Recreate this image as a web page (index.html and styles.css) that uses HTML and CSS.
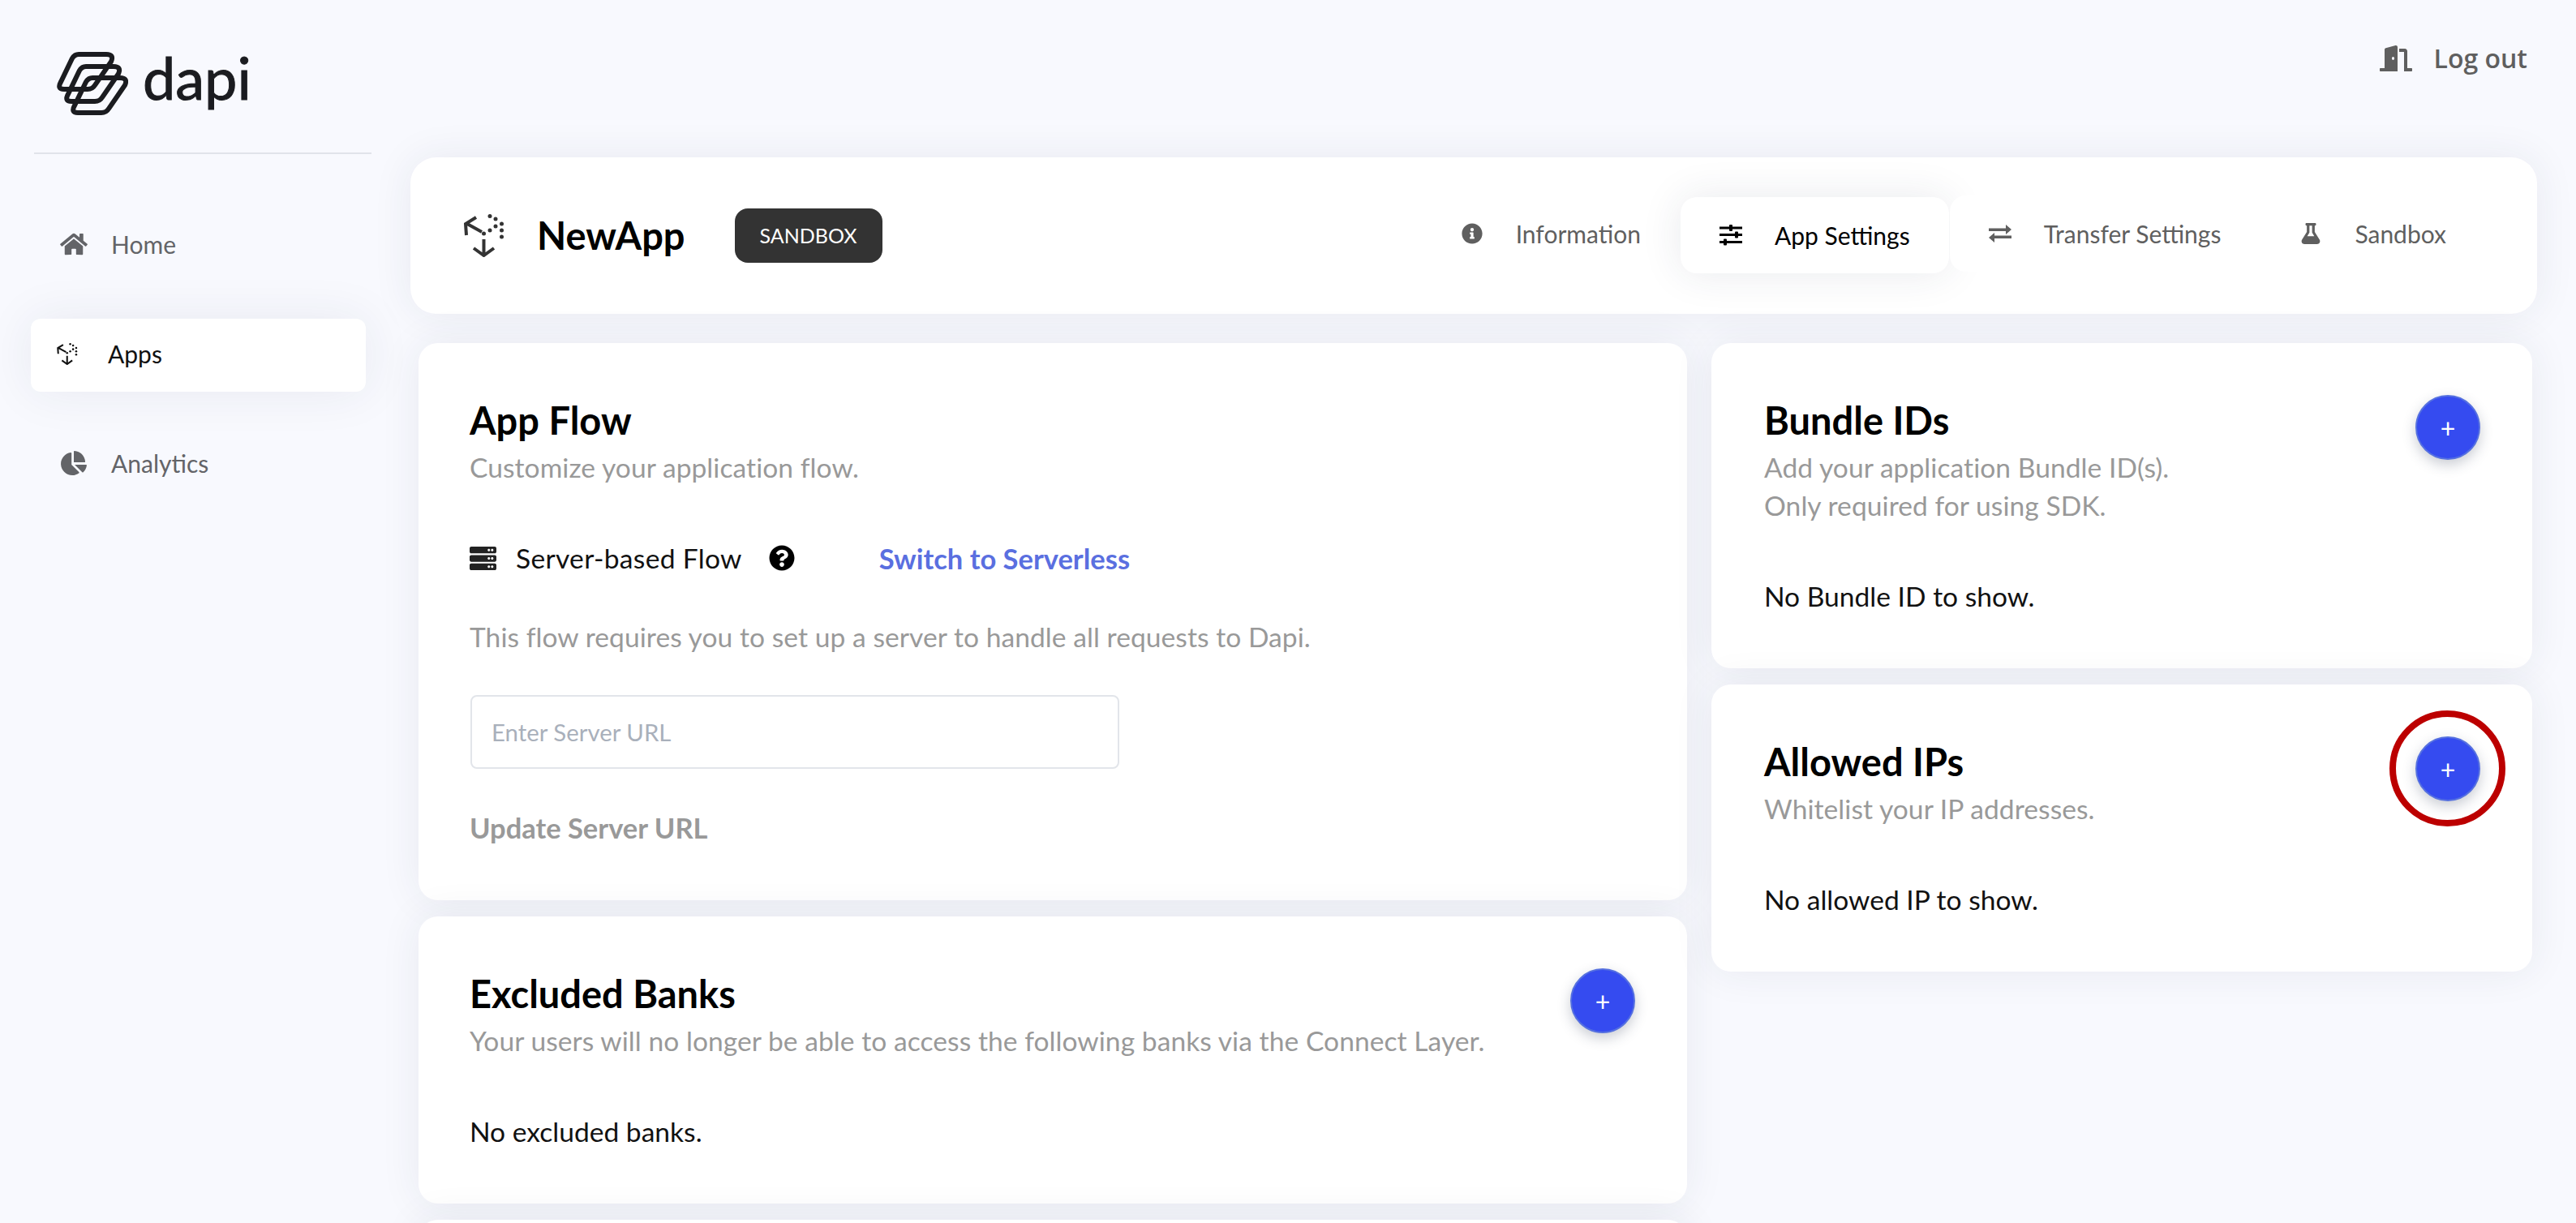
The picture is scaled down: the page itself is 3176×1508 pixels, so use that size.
FILE: index.html
```html
<!DOCTYPE html>
<html lang="en">
<head>
    <meta charset="UTF-8">
    <meta name="viewport" content="width=device-width, initial-scale=1.0">
    <title>Dapi - App Settings</title>
    <link rel="stylesheet" href="styles.css">
</head>
<body>

<div id="layout">
    <aside id="sidebar">
        <div class="brand">
            <svg class="brand-mark" viewBox="0 0 88 80">
                <path d="M27 3H61Q71 3 67 12L47 41Q44 46 38 46H9Q0 46 5 37L19 8Q22 3 27 3Z"/>
                <path transform="translate(9 15)" d="M27 3H61Q71 3 67 12L47 41Q44 46 38 46H9Q0 46 5 37L19 8Q22 3 27 3Z"/>
                <path transform="translate(17 29)" d="M27 3H61Q71 3 67 12L47 41Q44 46 38 46H9Q0 46 5 37L19 8Q22 3 27 3Z"/>
            </svg>
            <span class="brand-name">dapi</span>
        </div>
        <nav class="side-nav">
            <a class="side-item">
                <svg class="side-icon" viewBox="0 0 576 512"><path d="M280.37 148.26L96 300.11V464a16 16 0 0 0 16 16l112.06-.29a16 16 0 0 0 15.92-16V368a16 16 0 0 1 16-16h64a16 16 0 0 1 16 16v95.64a16 16 0 0 0 16 16.05L464 480a16 16 0 0 0 16-16V300L295.67 148.26a12.19 12.19 0 0 0-15.3 0zM571.6 251.47L488 182.56V44.05a12 12 0 0 0-12-12h-56a12 12 0 0 0-12 12v72.61L318.47 43a48 48 0 0 0-61 0L4.34 251.47a12 12 0 0 0-1.6 16.9l25.5 31A12 12 0 0 0 45.15 301l235.22-193.74a12.19 12.19 0 0 1 15.3 0L530.9 301a12 12 0 0 0 16.9-1.6l25.5-31a12 12 0 0 0-1.7-16.93z"/></svg>
                <span>Home</span>
            </a>
            <a class="side-item active">
                <svg class="side-icon cube" viewBox="0 0 50 53">
                    <path class="cube-line" d="M22 22L4 12M15 4L2 12L3 26M24.500 31V50M12 42L24.500 51L37 42"/>
                    <g class="cube-dots"><circle cx="32" cy="2.500" r="2.500"/><circle cx="39" cy="6" r="2.500"/><circle cx="46.500" cy="12" r="2.500"/><circle cx="39" cy="15" r="2.500"/><circle cx="32" cy="20" r="2.500"/><circle cx="24.500" cy="24" r="2.500"/><circle cx="46.500" cy="20" r="2.500"/><circle cx="46.500" cy="28" r="2.500"/></g>
                </svg>
                <span>Apps</span>
            </a>
            <a class="side-item">
                <svg class="side-icon" viewBox="0 0 544 512"><path d="M527.79 288H290.5l158.03 158.03c6.04 6.04 15.98 6.53 22.19.68 38.7-36.46 65.32-85.61 73.13-140.86 1.34-9.46-6.51-17.85-16.06-17.85zm-15.83-64.8C503.72 103.74 408.26 8.28 288.8.04 279.68-.59 272 7.1 272 16.24V240h223.77c9.14 0 16.82-7.68 16.19-16.8zM224 288V50.71c0-9.55-8.39-17.4-17.84-16.06C86.99 51.49-4.1 155.6.14 280.37 4.5 408.51 114.83 513.59 243.03 511.98c50.4-.63 96.97-16.87 135.26-44.03 7.9-5.6 8.42-17.23 1.57-24.08L224 288z"/></svg>
                <span>Analytics</span>
            </a>
        </nav>
    </aside>

    <main id="main">
        <div class="topbar">
            <a class="logout">
                <svg class="logout-icon" viewBox="0 0 640 512"><path d="M624 448h-80V113.45C544 86.19 522.47 64 496 64H384v64h96v384h144c8.84 0 16-7.16 16-16v-32c0-8.84-7.16-16-16-16zM312.24 1.01l-192 49.74C105.99 54.44 96 67.7 96 82.92V448H16c-8.84 0-16 7.16-16 16v32c0 8.84 7.16 16 16 16h336V33.18c0-21.58-19.56-37.41-39.76-32.17zM264 288c-13.25 0-24-14.33-24-32s10.75-32 24-32 24 14.33 24 32-10.75 32-24 32z"/></svg>
                <span>Log out</span>
            </a>
        </div>

        <header class="app-header">
            <div class="app-id">
                <svg class="app-icon cube" viewBox="0 0 50 53">
                    <path class="cube-line" d="M22 22L4 12M15 4L2 12L3 26M24.500 31V50M12 42L24.500 51L37 42"/>
                    <g class="cube-dots"><circle cx="32" cy="2.500" r="2.500"/><circle cx="39" cy="6" r="2.500"/><circle cx="46.500" cy="12" r="2.500"/><circle cx="39" cy="15" r="2.500"/><circle cx="32" cy="20" r="2.500"/><circle cx="24.500" cy="24" r="2.500"/><circle cx="46.500" cy="20" r="2.500"/><circle cx="46.500" cy="28" r="2.500"/></g>
                </svg>
                <span class="app-name">NewApp</span>
                <span class="env-badge">SANDBOX</span>
            </div>
            <nav class="tabs">
                <a class="tab">
                    <svg class="tab-icon" viewBox="0 0 512 512"><path d="M256 8C119.043 8 8 119.083 8 256c0 136.997 111.043 248 248 248s248-111.003 248-248C504 119.083 392.957 8 256 8zm0 110c23.196 0 42 18.804 42 42s-18.804 42-42 42-42-18.804-42-42 18.804-42 42-42zm56 254c0 6.627-5.373 12-12 12h-88c-6.627 0-12-5.373-12-12v-24c0-6.627 5.373-12 12-12h12v-64h-12c-6.627 0-12-5.373-12-12v-24c0-6.627 5.373-12 12-12h64c6.627 0 12 5.373 12 12v100h12c6.627 0 12 5.373 12 12v24z"/></svg>
                    <span>Information</span>
                </a>
                <a class="tab active">
                    <svg class="tab-icon" viewBox="0 0 28 26"><rect x="0" y="2.500" width="28" height="3"/><rect x="0" y="11" width="28" height="3"/><rect x="0" y="20" width="28" height="3"/><rect x="12" y="0" width="4" height="8" rx="1"/><rect x="19" y="8.500" width="4" height="8" rx="1"/><rect x="5" y="17.500" width="4" height="8" rx="1"/></svg>
                    <span>App Settings</span>
                </a>
                <a class="tab">
                    <svg class="tab-icon" viewBox="0 0 28 22"><path d="M0 4.500H21V0L28 6L21 12V8H0ZM28 13.500H7V10L0 16L7 22V17H28Z"/></svg>
                    <span>Transfer Settings</span>
                </a>
                <a class="tab">
                    <svg class="tab-icon" viewBox="0 0 448 512"><path d="M437.2 403.5L320 215V64h8c13.3 0 24-10.7 24-24V24c0-13.3-10.7-24-24-24H120c-13.3 0-24 10.7-24 24v16c0 13.3 10.7 24 24 24h8v151L10.8 403.5C-18.5 450.6 15.3 512 70.9 512h306.2c55.7 0 89.4-61.5 60.1-108.5zM137.9 320l48.2-77.6c3.7-5.2 5.8-11.6 5.8-18.4V64h64v160c0 6.9 2.2 13.2 5.8 18.4l48.2 77.6h-172z"/></svg>
                    <span>Sandbox</span>
                </a>
            </nav>
        </header>

        <div class="content">
            <div class="col col-left">
                <section class="card">
                    <h2>App Flow</h2>
                    <p class="sub">Customize your application flow.</p>
                    <div class="flow-row">
                        <svg class="flow-icon" viewBox="0 0 512 512"><path d="M480 160H32c-17.673 0-32-14.327-32-32V64c0-17.673 14.327-32 32-32h448c17.673 0 32 14.327 32 32v64c0 17.673-14.327 32-32 32zm-48-88c-13.255 0-24 10.745-24 24s10.745 24 24 24 24-10.745 24-24-10.745-24-24-24zm-64 0c-13.255 0-24 10.745-24 24s10.745 24 24 24 24-10.745 24-24-10.745-24-24-24zm112 248H32c-17.673 0-32-14.327-32-32v-64c0-17.673 14.327-32 32-32h448c17.673 0 32 14.327 32 32v64c0 17.673-14.327 32-32 32zm-48-88c-13.255 0-24 10.745-24 24s10.745 24 24 24 24-10.745 24-24-10.745-24-24-24zm-64 0c-13.255 0-24 10.745-24 24s10.745 24 24 24 24-10.745 24-24-10.745-24-24-24zm112 248H32c-17.673 0-32-14.327-32-32v-64c0-17.673 14.327-32 32-32h448c17.673 0 32 14.327 32 32v64c0 17.673-14.327 32-32 32zm-48-88c-13.255 0-24 10.745-24 24s10.745 24 24 24 24-10.745 24-24-10.745-24-24-24zm-64 0c-13.255 0-24 10.745-24 24s10.745 24 24 24 24-10.745 24-24-10.745-24-24-24z"/></svg>
                        <span class="flow-name">Server-based Flow</span>
                        <svg class="help-icon" viewBox="0 0 512 512"><path d="M504 256c0 136.997-111.043 248-248 248S8 392.997 8 256C8 119.083 119.043 8 256 8s248 111.083 248 248zM262.655 90c-54.497 0-89.255 22.957-116.549 63.758-3.536 5.286-2.353 12.415 2.715 16.258l34.699 26.31c5.205 3.947 12.621 3.008 16.665-2.122 17.864-22.658 30.113-35.797 57.303-35.797 20.429 0 45.698 13.148 45.698 32.958 0 14.976-12.363 22.667-32.534 33.976C247.128 238.528 216 254.941 216 296v4c0 6.627 5.373 12 12 12h56c6.627 0 12-5.373 12-12v-1.333c0-28.462 83.186-29.647 83.186-106.667 0-58.002-60.165-102-116.531-102zM256 338c-25.365 0-46 20.635-46 46 0 25.364 20.635 46 46 46s46-20.636 46-46c0-25.365-20.635-46-46-46z"/></svg>
                        <a class="switch-link">Switch to Serverless</a>
                    </div>
                    <p class="sub flow-desc">This flow requires you to set up a server to handle all requests to Dapi.</p>
                    <input class="server-input" type="text" placeholder="Enter Server URL">
                    <div class="update-link">Update Server URL</div>
                </section>

                <section class="card">
                    <div class="card-head">
                        <div>
                            <h2>Excluded Banks</h2>
                            <p class="sub">Your users will no longer be able to access the following banks via the Connect Layer.</p>
                        </div>
                        <button class="add-btn">+</button>
                    </div>
                    <p class="empty">No excluded banks.</p>
                </section>

                <section class="card card-next"></section>
            </div>

            <div class="col col-right">
                <section class="card">
                    <div class="card-head">
                        <div>
                            <h2>Bundle IDs</h2>
                            <p class="sub">Add your application Bundle ID(s).<br>Only required for using SDK.</p>
                        </div>
                        <button class="add-btn">+</button>
                    </div>
                    <p class="empty">No Bundle ID to show.</p>
                </section>

                <section class="card">
                    <div class="card-head">
                        <div>
                            <h2>Allowed IPs</h2>
                            <p class="sub">Whitelist your IP addresses.</p>
                        </div>
                        <div class="add-wrap">
                            <button class="add-btn">+</button>
                            <span class="callout-ring"></span>
                        </div>
                    </div>
                    <p class="empty">No allowed IP to show.</p>
                </section>
            </div>
        </div>
    </main>
</div>

</body>
</html>
```

FILE: styles.css
```css
html, body {
    height: 100%;
}
body {
    margin: 0;
    overflow: hidden;
    font-family: "Lato", "Noto Sans", sans-serif;
    font-size: 33.6px;
    color: #111;
    background: #f8f9fe;
}
h2, p {
    margin: 0;
}
svg {
    fill: currentColor;
    flex-shrink: 0;
}
#layout {
    display: flex;
    height: 100%;
}

/* sidebar */
#sidebar {
    width: 506px;
    flex-shrink: 0;
}
.brand {
    display: flex;
    align-items: flex-start;
    height: 190px;
    margin: 0 48px 0 42px;
    padding: 64px 0 0 28px;
    box-sizing: border-box;
    border-bottom: 2px solid #e1e3ea;
}
.brand-mark {
    width: 88px;
    height: 80px;
    fill: none;
    stroke: #1b1c20;
    stroke-width: 6;
}
.brand-name {
    margin-left: 18px;
    margin-top: -9px;
    font-size: 72px;
    line-height: 80px;
    color: #1b1c20;
    -webkit-text-stroke: 1px #1b1c20;
}
.side-nav {
    display: flex;
    flex-direction: column;
    gap: 45px;
    margin-top: 68px;
    margin-left: 42px;
    width: 413px;
}
.side-item {
    display: flex;
    align-items: center;
    height: 90px;
    padding-left: 32px;
    padding-bottom: 4px;
    box-sizing: border-box;
    font-size: 30px;
    color: #636468;
    border-radius: 12px;
}
.side-item.active {
    margin: 0 4px 0 -4px;
    color: #111;
    background: #fff;
    box-shadow: 0 0 60px rgba(40, 50, 80, 0.08);
}
.side-icon {
    width: 34px;
    height: 30px;
    margin-right: 29px;
}
.side-item.active .side-icon {
    width: 26px;
    height: 27px;
    margin-right: 37px;
}
.cube-line {
    fill: none;
    stroke: currentColor;
    stroke-width: 4;
}
.cube {
    color: #333;
}
.side-item.active .cube {
    color: #111;
}

/* top */
#main {
    flex: 1;
    min-width: 0;
    padding-right: 48px;
}
.topbar {
    display: flex;
    justify-content: flex-end;
    height: 194px;
    padding-top: 52px;
    padding-right: 12px;
    box-sizing: border-box;
}
.logout {
    display: flex;
    align-items: flex-start;
    font-family: "Open Sans", sans-serif;
    font-size: 32px;
    font-weight: 600;
    line-height: 40px;
    color: #5f5f5f;
}
.logout-icon {
    width: 40px;
    height: 32px;
    margin-top: 4px;
    margin-right: 27px;
}
.app-header {
    display: flex;
    justify-content: space-between;
    align-items: center;
    height: 193px;
    padding: 0 64px;
    box-sizing: border-box;
    background: #fff;
    border-radius: 32px;
    box-shadow: 0 0 50px rgba(40, 50, 80, 0.08);
}
.app-id {
    display: flex;
    align-items: center;
    padding-left: 2px;
}
.app-icon {
    width: 50px;
    height: 53px;
}
.app-name {
    margin-left: 40px;
    font-size: 47px;
    line-height: 56px;
    padding-bottom: 2px;
    font-weight: 700;
    color: #000;
}
.env-badge {
    margin-left: 61px;
    width: 182px;
    height: 67px;
    line-height: 67px;
    text-align: center;
    font-size: 25px;
    color: #fff;
    background: #333;
    border-radius: 16px;
}
.tabs {
    display: flex;
    align-items: center;
    gap: 1px;
    margin-bottom: 5px;
}
.tab {
    display: flex;
    align-items: center;
    height: 94px;
    padding: 0 48px;
    font-size: 30px;
    color: #5f5f5f;
    background: #fff;
    border-radius: 20px;
}
.tab.active {
    margin-top: 4px;
    color: #000;
    box-shadow: 0 0 50px rgba(40, 50, 80, 0.1);
}
.tab-icon {
    width: 28px;
    height: 26px;
    margin-right: 40px;
}

/* cards */
.content {
    display: flex;
    gap: 30px;
    padding: 36px 6px 0 10px;
}
.col {
    display: flex;
    flex-direction: column;
    gap: 20px;
}
.col-left {
    width: 1564px;
}
.col-right {
    width: 1012px;
}
.card {
    padding: 64px 64px 64px 63px;
    background: #fff;
    border-radius: 24px;
    box-shadow: 0 0 50px rgba(40, 50, 80, 0.08);
}
.col-right .card {
    padding-left: 65px;
}
.card-next {
    height: 200px;
}
.card-head {
    display: flex;
    justify-content: space-between;
    align-items: flex-start;
}
h2 {
    margin-bottom: 4px;
    font-size: 47px;
    line-height: 62px;
    font-weight: 700;
    color: #000;
}
.sub {
    line-height: 47px;
    padding-bottom: 1px;
    letter-spacing: 0.05px;
    color: #999;
}
.empty {
    margin-top: 64px;
    line-height: 47px;
    padding-bottom: 1px;
}
.flow-row {
    display: flex;
    align-items: center;
    height: 40px;
    margin-top: 67px;
}
.flow-icon {
    width: 33px;
    height: 33px;
    color: #222;
}
.flow-name {
    margin-left: 24px;
    letter-spacing: 0.3px;
}
.help-icon {
    width: 32px;
    height: 32px;
    margin-left: 33px;
    color: #000;
}
.switch-link {
    margin-left: 104px;
    font-size: 34.5px;
    font-weight: 700;
    color: #5a6fe0;
}
.flow-desc {
    margin-top: 54px;
}
.server-input {
    display: block;
    width: 800px;
    height: 91px;
    margin-top: 47px;
    margin-left: 1px;
    padding: 0 24px;
    box-sizing: border-box;
    font-family: inherit;
    font-size: 29.4px;
    background: #fff;
    border: 2px solid #e2e5ea;
    border-radius: 8px;
}
.server-input::placeholder {
    color: #a9b0bb;
    opacity: 1;
}
.update-link {
    margin-top: 50px;
    font-size: 34.5px;
    line-height: 46px;
    padding-bottom: 2px;
    font-weight: 700;
    color: #999;
}
.add-wrap {
    position: relative;
    width: 80px;
    height: 80px;
}
.add-btn {
    flex-shrink: 0;
    display: block;
    width: 80px;
    height: 80px;
    padding: 0;
    font-family: inherit;
    font-size: 32px;
    color: #fff;
    background: #354bf0;
    border: 2px solid #5570e0;
    border-radius: 50%;
    box-shadow: 0 6px 16px rgba(40, 50, 80, 0.25);
}
.callout-ring {
    position: absolute;
    left: -32px;
    top: -32px;
    width: 143px;
    height: 143px;
    box-sizing: border-box;
    border: 8px solid #bc0000;
    border-radius: 50%;
}
```
